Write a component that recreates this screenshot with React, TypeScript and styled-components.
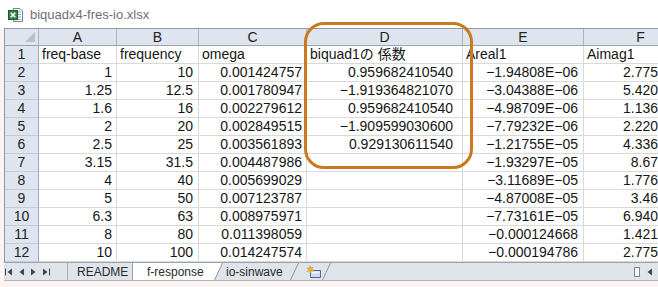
import React from "react";
import styled, { createGlobalStyle } from "styled-components";

const GlobalStyle = createGlobalStyle`
  html, body {
    margin: 0;
    padding: 0;
  }
  body {
    background: #fbf2f2;
    font-family: "Liberation Sans", "Noto Sans CJK JP", sans-serif;
  }
`;

type Align = "left" | "right" | "center";

type Column = {
  key: string;
  width: number;
  pad: number;
};

const columns: Column[] = [
  { key: "A", width: 78, pad: 4 },
  { key: "B", width: 82, pad: 5 },
  { key: "C", width: 108, pad: 4 },
  { key: "D", width: 156, pad: 9 },
  { key: "E", width: 121, pad: 5 },
  { key: "F", width: 114, pad: 39 },
];

const labels = ["freq-base", "frequency", "omega", "biquad1の 係数", "Areal1", "Aimag1"];

const rows: string[][] = [
  ["1", "10", "0.001424757", "0.959682410540", "−1.94808E−06", "2.775"],
  ["1.25", "12.5", "0.001780947", "−1.919364821070", "−3.04388E−06", "5.420"],
  ["1.6", "16", "0.002279612", "0.959682410540", "−4.98709E−06", "1.136"],
  ["2", "20", "0.002849515", "−1.909599030600", "−7.79232E−06", "2.220"],
  ["2.5", "25", "0.003561893", "0.929130611540", "−1.21755E−05", "4.336"],
  ["3.15", "31.5", "0.004487986", "", "−1.93297E−05", "8.67"],
  ["4", "40", "0.005699029", "", "−3.11689E−05", "1.776"],
  ["5", "50", "0.007123787", "", "−4.87008E−05", "3.46"],
  ["6.3", "63", "0.008975971", "", "−7.73161E−05", "6.940"],
  ["8", "80", "0.011398059", "", "−0.000124668", "1.421"],
  ["10", "100", "0.014247574", "", "−0.000194786", "2.775"],
];

const Page = styled.div`
  position: relative;
  width: 658px;
  height: 287px;
  overflow: hidden;
  background: #fbf2f2;
`;

const TitleBar = styled.div`
  height: 28px;
  display: flex;
  align-items: center;
  gap: 6px;
  padding: 1px 0 0 8px;
  box-sizing: border-box;
  background: #fff;
  color: #707070;
  font-size: 13px;
`;

const Sheet = styled.div`
  margin-left: 4px;
  border-top: 1px solid #8f98a3;
  border-left: 1px solid #8f98a3;
  overflow: hidden;
  background: #fff;
`;

const Grid = styled.div<{ $cols: string }>`
  display: grid;
  grid-template-columns: ${(p) => p.$cols};
  grid-template-rows: 17px repeat(12, 18px);
  font-size: 14px;
  color: #151515;
`;

const Cell = styled.div<{ $align: Align; $pad: number }>`
  box-sizing: border-box;
  border-right: 1px solid #d9d9d9;
  border-bottom: 1px solid #d9d9d9;
  line-height: 17px;
  white-space: nowrap;
  overflow: hidden;
  text-align: ${(p) => p.$align};
  padding: ${(p) => (p.$align === "right" ? `0 ${p.$pad}px 0 0` : "0 0 0 3px")};
`;

const ColHead = styled.div`
  box-sizing: border-box;
  background: #dee5ee;
  border-right: 1px solid #aab3be;
  border-bottom: 1px solid #9aa5b2;
  line-height: 16px;
  text-align: center;
  color: #222;
`;

const RowHead = styled.div`
  box-sizing: border-box;
  background: #dee5ee;
  border-right: 1px solid #9aa5b2;
  border-bottom: 1px solid #c3cbd6;
  line-height: 17px;
  text-align: center;
  color: #222;
`;

const Corner = styled(ColHead)`
  position: relative;
  &::after {
    content: "";
    position: absolute;
    right: 3px;
    bottom: 3px;
    width: 0;
    height: 0;
    border-left: 10px solid transparent;
    border-bottom: 10px solid #b9c0c9;
  }
`;

const Callout = styled.div`
  position: absolute;
  left: 304px;
  top: 22px;
  width: 169px;
  height: 147px;
  border: 3px solid #c97a1e;
  border-radius: 20px;
  box-sizing: border-box;
  pointer-events: none;
`;

const TabBar = styled.div`
  display: flex;
  align-items: stretch;
  height: 19px;
  margin-left: 4px;
  background: #dfe4ea;
  border-top: 1px solid #9ba4ae;
  border-bottom: 1px solid #b0b7bf;
  box-sizing: border-box;
  font-size: 12px;
  color: #2a2a2a;
`;

const NavGroup = styled.div`
  width: 64px;
  box-sizing: border-box;
  display: flex;
  align-items: center;
  gap: 7px;
  padding-left: 1px;
  border-right: 1px solid #a3abb5;
`;

const Tab = styled.div<{ $width: number; $active?: boolean; $edge?: boolean; $pad: number }>`
  width: ${(p) => p.$width}px;
  box-sizing: border-box;
  padding-left: ${(p) => p.$pad}px;
  display: flex;
  align-items: center;
  white-space: nowrap;
  overflow: hidden;
  background: ${(p) => (p.$active ? "#fff" : "transparent")};
  border-right: ${(p) => (p.$edge ? "1px solid #98a1ab" : "none")};
`;

const NewTab = styled.div`
  width: 23px;
  display: flex;
  align-items: center;
  padding-left: 7px;
  box-sizing: border-box;
`;

const ScrollEnd = styled.div`
  margin-left: auto;
  display: flex;
  align-items: center;
  gap: 7px;
  padding-right: 6px;
`;

const Splitter = styled.div`
  width: 6px;
  height: 10px;
  box-sizing: border-box;
  border: 1px solid #7d8791;
  background: #f4f6f8;
`;

const Slant = ({ fill }: { fill: string }) => (
  <svg width="9" height="17" viewBox="0 0 9 17" style={{ display: "block" }}>
    <path d="M0 0 L8.5 0 L0.5 17 L0 17 Z" fill={fill} />
    <path d="M0.5 17 L8.5 0" stroke="#8c959f" strokeWidth="1" fill="none" />
  </svg>
);

const NavIcon = ({ dir, bar }: { dir: "left" | "right"; bar?: boolean }) => {
  const w = bar ? 7 : 5;
  return (
    <svg width={w} height="8" viewBox={`0 0 ${w} 8`} style={{ display: "block" }}>
      {dir === "left" ? (
        <>
          {bar && <rect x="0" y="0.5" width="1" height="7" fill="#3c4650" />}
          <path d={`M${w} 0.5 L${w - 4.5} 4 L${w} 7.5 Z`} fill="#3c4650" />
        </>
      ) : (
        <>
          <path d="M0 0.5 L4.5 4 L0 7.5 Z" fill="#3c4650" />
          {bar && <rect x={w - 1} y="0.5" width="1" height="7" fill="#3c4650" />}
        </>
      )}
    </svg>
  );
};

const ExcelIcon = () => (
  <svg width="16" height="16" viewBox="0 0 16 16" style={{ display: "block" }}>
    <path d="M5.5 1.5h6.5l2.5 2.5v10.5h-9z" fill="#fff" stroke="#6a84a6" />
    <path d="M9 5h4M9 7.5h4M9 10h4M7 12.5h6" stroke="#8fa6c4" />
    <rect x="0.5" y="3.5" width="9" height="9" fill="#2d8a3c" stroke="#1b5c26" />
    <path d="M2.7 5.7l4.6 4.6M7.3 5.7l-4.6 4.6" stroke="#fff" strokeWidth="1.6" />
  </svg>
);

const NewSheetIcon = () => (
  <svg width="16" height="14" viewBox="0 0 16 14" style={{ display: "block" }}>
    <path d="M4.5 5.5h10v7h-10z" fill="#c9d8ea" stroke="#4d6a8c" />
    <path d="M5.5 6.5h8v2h-8z" fill="#eef3f9" />
    <path d="M4 0.5l0.9 2.4 2.4-0.7-1.6 1.9 1.9 1.6-2.5 0.1-0.6 2.4-1-2.3-2.4 0.6 1.7-1.8-1.8-1.7 2.5 0.2z" fill="#f2b623" stroke="#d08a14" strokeWidth="0.5" />
  </svg>
);

const App: React.FC = () => {
  const template = ["34px", ...columns.map((c) => `${c.width}px`)].join(" ");

  return (
    <Page>
      <GlobalStyle />
      <TitleBar>
        <ExcelIcon />
        <span>biquadx4-fres-io.xlsx</span>
      </TitleBar>
      <Sheet>
        <Grid $cols={template}>
          <Corner />
          {columns.map((c) => (
            <ColHead key={c.key}>{c.key}</ColHead>
          ))}
          <RowHead>1</RowHead>
          {labels.map((text, i) => (
            <Cell key={text} $align="left" $pad={columns[i].pad}>
              {text}
            </Cell>
          ))}
          {rows.map((row, r) => (
            <React.Fragment key={r}>
              <RowHead>{r + 2}</RowHead>
              {row.map((value, i) => (
                <Cell key={i} $align="right" $pad={columns[i].pad}>
                  {value}
                </Cell>
              ))}
            </React.Fragment>
          ))}
        </Grid>
      </Sheet>
      <TabBar>
        <NavGroup>
          <NavIcon dir="left" bar />
          <NavIcon dir="left" />
          <NavIcon dir="right" />
          <NavIcon dir="right" bar />
        </NavGroup>
        <Tab $width={65} $pad={9} $edge>README</Tab>
        <Tab $width={81} $active $pad={14}>f-response</Tab>
        <Slant fill="#fff" />
        <Tab $width={67} $pad={3}>io-sinwave</Tab>
        <Slant fill="transparent" />
        <NewTab>
          <NewSheetIcon />
        </NewTab>
        <Slant fill="transparent" />
        <ScrollEnd>
          <Splitter />
          <NavIcon dir="left" />
        </ScrollEnd>
      </TabBar>
      <Callout />
    </Page>
  );
};

export default App;
